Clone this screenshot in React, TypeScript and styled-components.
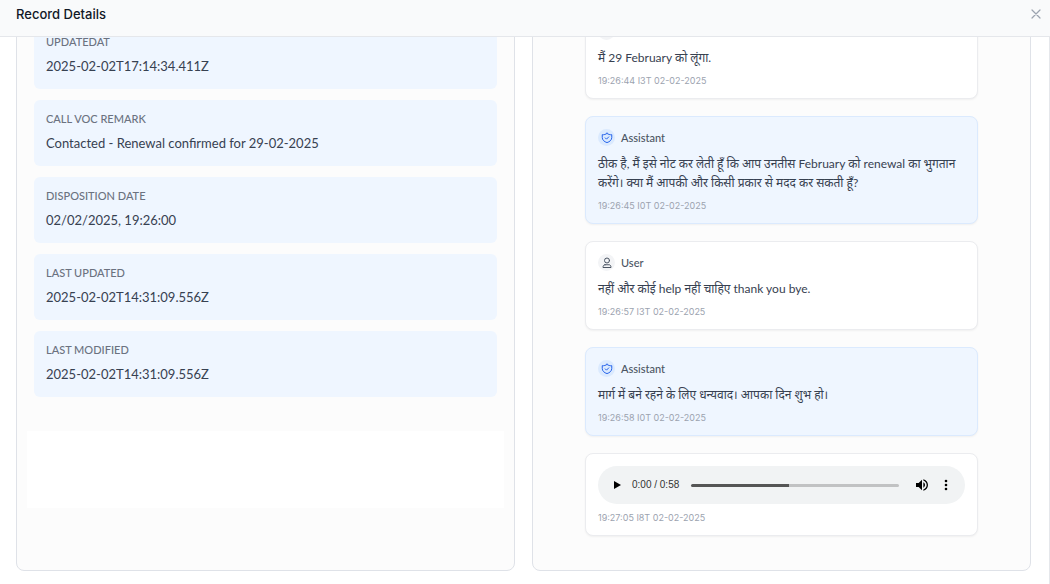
import React, { useState } from "react";
import styled, { createGlobalStyle } from "styled-components";

const GlobalStyle = createGlobalStyle`
  * { box-sizing: border-box; }
  body {
    margin: 0;
    background: #ffffff;
    color: #374151;
    font-family: Lato, "Noto Sans", sans-serif;
  }
  h2, p, dl, dt, dd, ul { margin: 0; padding: 0; }
`;

const Dialog = styled.section`
  display: flex;
  flex-direction: column;
  height: 100vh;
  background: #ffffff;
`;

const Header = styled.header`
  display: flex;
  align-items: center;
  justify-content: space-between;
  flex: none;
  height: 37px;
  padding: 0 8px 8px 16px;
  background: #f9fafb;
  border-bottom: 1px solid #e5e7eb;
`;

const Title = styled.h2`
  font-family: Inter, sans-serif;
  font-size: 13px;
  line-height: 20px;
  font-weight: 500;
  color: #111827;
`;

const IconButton = styled.button`
  display: flex;
  align-items: center;
  justify-content: center;
  flex: none;
  width: 12px;
  height: 20px;
  padding: 0;
  border: 0;
  background: none;
  color: #9ca3af;
  cursor: pointer;
`;

/* Reversed column keeps the newest entries in view when the dialog opens. */
const ScrollArea = styled.div`
  display: flex;
  flex-direction: column-reverse;
  flex: 1;
  min-height: 0;
  padding: 0 18px 13px 16px;
  border-right: 1px solid #e5e7eb;
  overflow-y: auto;
  scrollbar-width: none;
`;

const Columns = styled.div`
  display: grid;
  grid-template-columns: 1fr 1fr;
  gap: 17px;
  flex: none;
`;

const Panel = styled.section`
  display: flex;
  flex-direction: column;
  justify-content: flex-end;
  background: #fcfcfc;
  border: 1px solid #dfe2e8;
  border-radius: 8px;
`;

const RecordPanel = styled(Panel)`
  padding: 0 17px 62px;
`;

const ChatPanel = styled(Panel)`
  padding: 0 52px 34px;
`;

const FieldList = styled.dl`
  display: flex;
  flex-direction: column;
  gap: 11px;
`;

const Field = styled.div`
  height: 66px;
  padding: 11px 12px;
  background: #eff6ff;
  border-radius: 6px;
`;

const FieldLabel = styled.dt`
  font-size: 11px;
  line-height: 16px;
  font-weight: 500;
  color: #6b7280;
  text-transform: uppercase;
`;

const FieldValue = styled.dd`
  margin-top: 6px;
  font-size: 13px;
  line-height: 20px;
  color: #374151;
`;

const EmptyBlock = styled.div`
  height: 77px;
  margin: 34px -7px 0;
  background: #ffffff;
`;

const Messages = styled.ul`
  display: flex;
  flex-direction: column;
  gap: 17px;
  list-style: none;
`;

const Bubble = styled.li<{ $assistant?: boolean }>`
  padding: 12px 12px 11px;
  border: 1px solid ${(p) => (p.$assistant ? "#dbeafe" : "#ebecef")};
  border-radius: 8px;
  background: ${(p) => (p.$assistant ? "#eff6ff" : "#ffffff")};
  box-shadow: 0 1px 2px rgba(0, 0, 0, 0.05);
`;

const Author = styled.div`
  display: flex;
  align-items: center;
  gap: 6px;
  height: 17px;
  font-size: 11px;
  line-height: 17px;
  font-weight: 500;
  color: #4b5563;
`;

const Avatar = styled.span<{ $assistant?: boolean }>`
  display: flex;
  align-items: center;
  justify-content: center;
  width: 17px;
  height: 17px;
  border-radius: 50%;
  background: ${(p) => (p.$assistant ? "#dbeafe" : "#f3f4f6")};
  color: ${(p) => (p.$assistant ? "#2563eb" : "#4b5563")};
`;

const MessageText = styled.p`
  margin-top: 8px;
  font-size: 12px;
  line-height: 19px;
  color: #374151;
`;

const Timestamp = styled.time`
  display: block;
  margin-top: 7px;
  font-family: Inter, sans-serif;
  font-size: 9px;
  line-height: 13px;
  color: #9ca3af;
`;

const Player = styled.div`
  display: flex;
  align-items: center;
  height: 38px;
  padding: 0 13px;
  border-radius: 19px;
  background: #f1f3f4;
  color: #000000;
`;

const PlayerButton = styled(IconButton)`
  color: #000000;
`;

const PlayerTime = styled.span`
  margin: 0 12px 0 9px;
  font-family: "Liberation Sans", sans-serif;
  font-size: 10px;
  line-height: 16px;
  color: #333333;
  white-space: nowrap;
`;

const Seek = styled.input<{ $value: number }>`
  appearance: none;
  flex: 1;
  min-width: 0;
  height: 3px;
  margin: 0 15px 0 0;
  border-radius: 2px;
  background: linear-gradient(
    to right,
    #555555 ${(p) => p.$value}%,
    #c1c2c3 ${(p) => p.$value}%
  );
  cursor: pointer;

  &::-webkit-slider-thumb {
    appearance: none;
    width: 1px;
    height: 1px;
    opacity: 0;
  }
`;

const CloseIcon = () => (
  <svg width="12" height="12" viewBox="0 0 12 12" fill="none" stroke="currentColor" strokeWidth="1.2" strokeLinecap="round" aria-hidden="true">
    <path d="M2 2l8 8M10 2l-8 8" />
  </svg>
);

const ShieldIcon = () => (
  <svg width="12" height="12" viewBox="0 0 24 24" fill="none" stroke="currentColor" strokeWidth="2" strokeLinecap="round" strokeLinejoin="round" aria-hidden="true">
    <path d="M12 2.8C9.5 4.900 6.200 5.700 2.500 5.400V11c0 5 4 8.500 9.500 10.200 5.500-1.700 9.500-5.200 9.500-10.200V5.400c-3.700.3-7-.5-9.500-2.600Z" />
    <path d="M8.500 11.800l2.500 2.500 4.500-4.600" />
  </svg>
);

const UserIcon = () => (
  <svg width="12" height="12" viewBox="0 0 24 24" fill="none" stroke="currentColor" strokeWidth="2" strokeLinecap="round" strokeLinejoin="round" aria-hidden="true">
    <circle cx="12" cy="7" r="5" />
    <path d="M8 15.500h8c2.500 0 4 2 4 5.500H4c0-3.500 1.500-5.500 4-5.500Z" />
  </svg>
);

const PlayIcon = () => (
  <svg width="12" height="12" viewBox="0 0 12 12" fill="currentColor" aria-hidden="true">
    <path d="M3 1.900v8.200L10 6z" />
  </svg>
);

const VolumeIcon = () => (
  <svg width="16" height="16" viewBox="0 0 24 24" fill="currentColor" aria-hidden="true">
    <path d="M3 9v6h4l5 5V4L7 9H3zm13.500 3c0-1.770-1.020-3.290-2.500-4.030v8.050c1.480-.73 2.500-2.250 2.500-4.020zM14 3.230v2.060c2.890.86 5 3.540 5 6.710s-2.110 5.850-5 6.710v2.060c4.010-.91 7-4.490 7-8.770s-2.990-7.860-7-8.770z" />
  </svg>
);

const MoreIcon = () => (
  <svg width="12" height="12" viewBox="0 0 12 12" fill="currentColor" aria-hidden="true">
    <circle cx="6" cy="2" r="1.300" />
    <circle cx="6" cy="6" r="1.300" />
    <circle cx="6" cy="10" r="1.300" />
  </svg>
);

const VolumeButton = styled(PlayerButton)`
  width: 16px;
  margin-right: 10px;
`;

const fields = [
  ["UpdatedAt", "2025-02-02T17:14:34.411Z"],
  ["Call VOC Remark", "Contacted - Renewal confirmed for 29-02-2025"],
  ["Disposition Date", "02/02/2025, 19:26:00"],
  ["Last Updated", "2025-02-02T14:31:09.556Z"],
  ["Last Modified", "2025-02-02T14:31:09.556Z"],
];

const messages = [
  { author: "User", text: "मैं 29 February को लूंगा.", time: "19:26:44 I3T 02-02-2025" },
  {
    author: "Assistant",
    text: "ठीक है, मैं इसे नोट कर लेती हूँ कि आप उनतीस February को renewal का भुगतान करेंगे। क्या मैं आपकी और किसी प्रकार से मदद कर सकती हूँ?",
    time: "19:26:45 I0T 02-02-2025",
  },
  { author: "User", text: "नहीं और कोई help नहीं चाहिए thank you bye.", time: "19:26:57 I3T 02-02-2025" },
  { author: "Assistant", text: "मार्ग में बने रहने के लिए धन्यवाद। आपका दिन शुभ हो।", time: "19:26:58 I0T 02-02-2025" },
];

function AudioPlayer() {
  const [position, setPosition] = useState(47);
  return (
    <Player>
      <PlayerButton type="button" aria-label="Play">
        <PlayIcon />
      </PlayerButton>
      <PlayerTime>0:00 / 0:58</PlayerTime>
      <Seek
        type="range"
        aria-label="Seek"
        min={0}
        max={100}
        value={position}
        $value={position}
        onChange={(e) => setPosition(Number(e.target.value))}
      />
      <VolumeButton type="button" aria-label="Mute">
        <VolumeIcon />
      </VolumeButton>
      <PlayerButton type="button" aria-label="More options">
        <MoreIcon />
      </PlayerButton>
    </Player>
  );
}

export default function App() {
  return (
    <>
      <GlobalStyle />
      <Dialog aria-labelledby="dialog-title">
        <Header>
          <Title id="dialog-title">Record Details</Title>
          <IconButton type="button" aria-label="Close">
            <CloseIcon />
          </IconButton>
        </Header>
        <ScrollArea>
          <Columns>
            <RecordPanel aria-label="Record">
              <FieldList>
                {fields.map(([label, value]) => (
                  <Field key={label}>
                    <FieldLabel>{label}</FieldLabel>
                    <FieldValue>{value}</FieldValue>
                  </Field>
                ))}
              </FieldList>
              <EmptyBlock />
            </RecordPanel>
            <ChatPanel aria-label="Transcript">
              <Messages>
                {messages.map((m) => {
                  const assistant = m.author === "Assistant";
                  return (
                    <Bubble key={m.time} $assistant={assistant}>
                      <Author>
                        <Avatar $assistant={assistant}>{assistant ? <ShieldIcon /> : <UserIcon />}</Avatar>
                        {m.author}
                      </Author>
                      <MessageText>{m.text}</MessageText>
                      <Timestamp>{m.time}</Timestamp>
                    </Bubble>
                  );
                })}
                <Bubble>
                  <AudioPlayer />
                  <Timestamp>19:27:05 I8T 02-02-2025</Timestamp>
                </Bubble>
              </Messages>
            </ChatPanel>
          </Columns>
        </ScrollArea>
      </Dialog>
    </>
  );
}
